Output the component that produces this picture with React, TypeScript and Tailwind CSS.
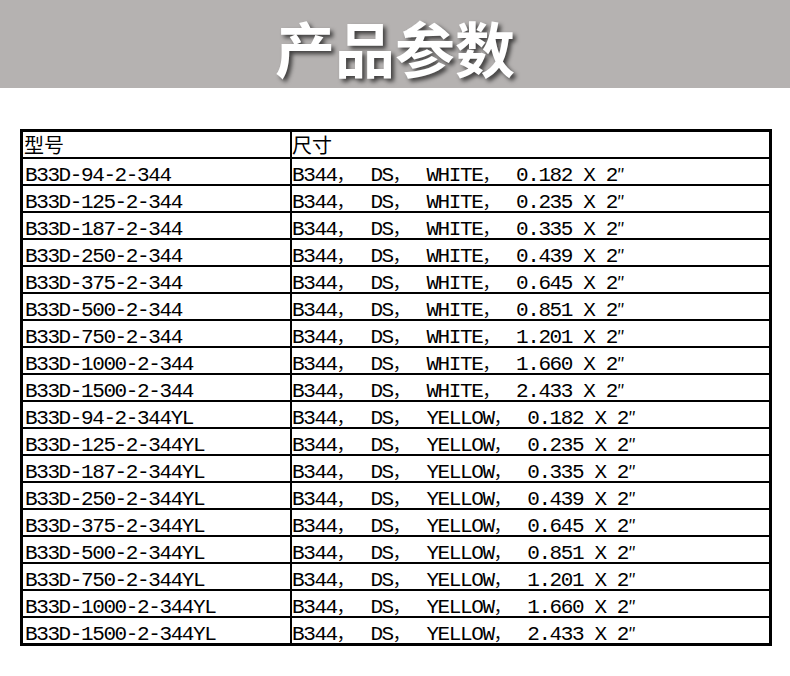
const colors = ['WHITE', 'YELLOW'];

const sizes = [
  ['94', '0.182'],
  ['125', '0.235'],
  ['187', '0.335'],
  ['250', '0.439'],
  ['375', '0.645'],
  ['500', '0.851'],
  ['750', '1.201'],
  ['1000', '1.660'],
  ['1500', '2.433'],
];

const rows = colors.flatMap((color) =>
  sizes.map(([len, size]) => ({
    model: `B33D-${len}-2-344${color === 'YELLOW' ? 'YL' : ''}`,
    color,
    size,
  }))
);

// full-width glyphs come from the CJK font; zero line-height keeps the row baseline put
function Cjk({ children, className = '' }: { children: string; className?: string }) {
  return (
    <span className={`inline-block leading-[0px] text-[17px] font-['Noto_Sans_CJK_SC'] tracking-normal ${className}`}>
      {children}
    </span>
  );
}

function Spec({ color, size }: { color: string; size: string }) {
  return (
    <span className="whitespace-pre">
      B344<Cjk className="w-[22.4px]">，</Cjk> DS<Cjk className="w-[22.4px]">，</Cjk> {color}
      <Cjk className="w-[22.4px]">，</Cjk> {size} X 2<Cjk>″</Cjk>
    </span>
  );
}

export default function App() {
  return (
    <div className="w-[790px] h-[676px] bg-white">
      <div className="h-[88px] bg-[#b5b2b1] flex items-center justify-center pt-[6px]">
        <h1 className="font-['Noto_Sans_CJK_SC',sans-serif] font-bold text-[60px] leading-none text-white [text-shadow:3px_3px_4px_rgba(0,0,0,0.65)]">
          产品参数
        </h1>
      </div>

      <div className="ml-[20px] mt-[41px] w-[752px] border-[3px] border-black text-black">
        <div className="flex h-[25px] font-['Noto_Sans_CJK_SC',sans-serif] text-[20px] leading-[25px]">
          <div className="w-[269px] border-r-2 border-black pl-[1px]">型号</div>
          <div className="flex-1">尺寸</div>
        </div>
        {rows.map((row) => (
          <div
            key={row.model}
            className="flex h-[25px] box-content border-t-2 border-black font-['Liberation_Mono','Noto_Sans_CJK_SC',monospace] text-[21px] tracking-[-1.4px] leading-[17px]"
          >
            <div className="w-[269px] border-r-2 border-black pl-[2px] pt-[8px]">{row.model}</div>
            <div className="flex-1 pt-[8px]">
              <Spec color={row.color} size={row.size} />
            </div>
          </div>
        ))}
      </div>
    </div>
  );
}
